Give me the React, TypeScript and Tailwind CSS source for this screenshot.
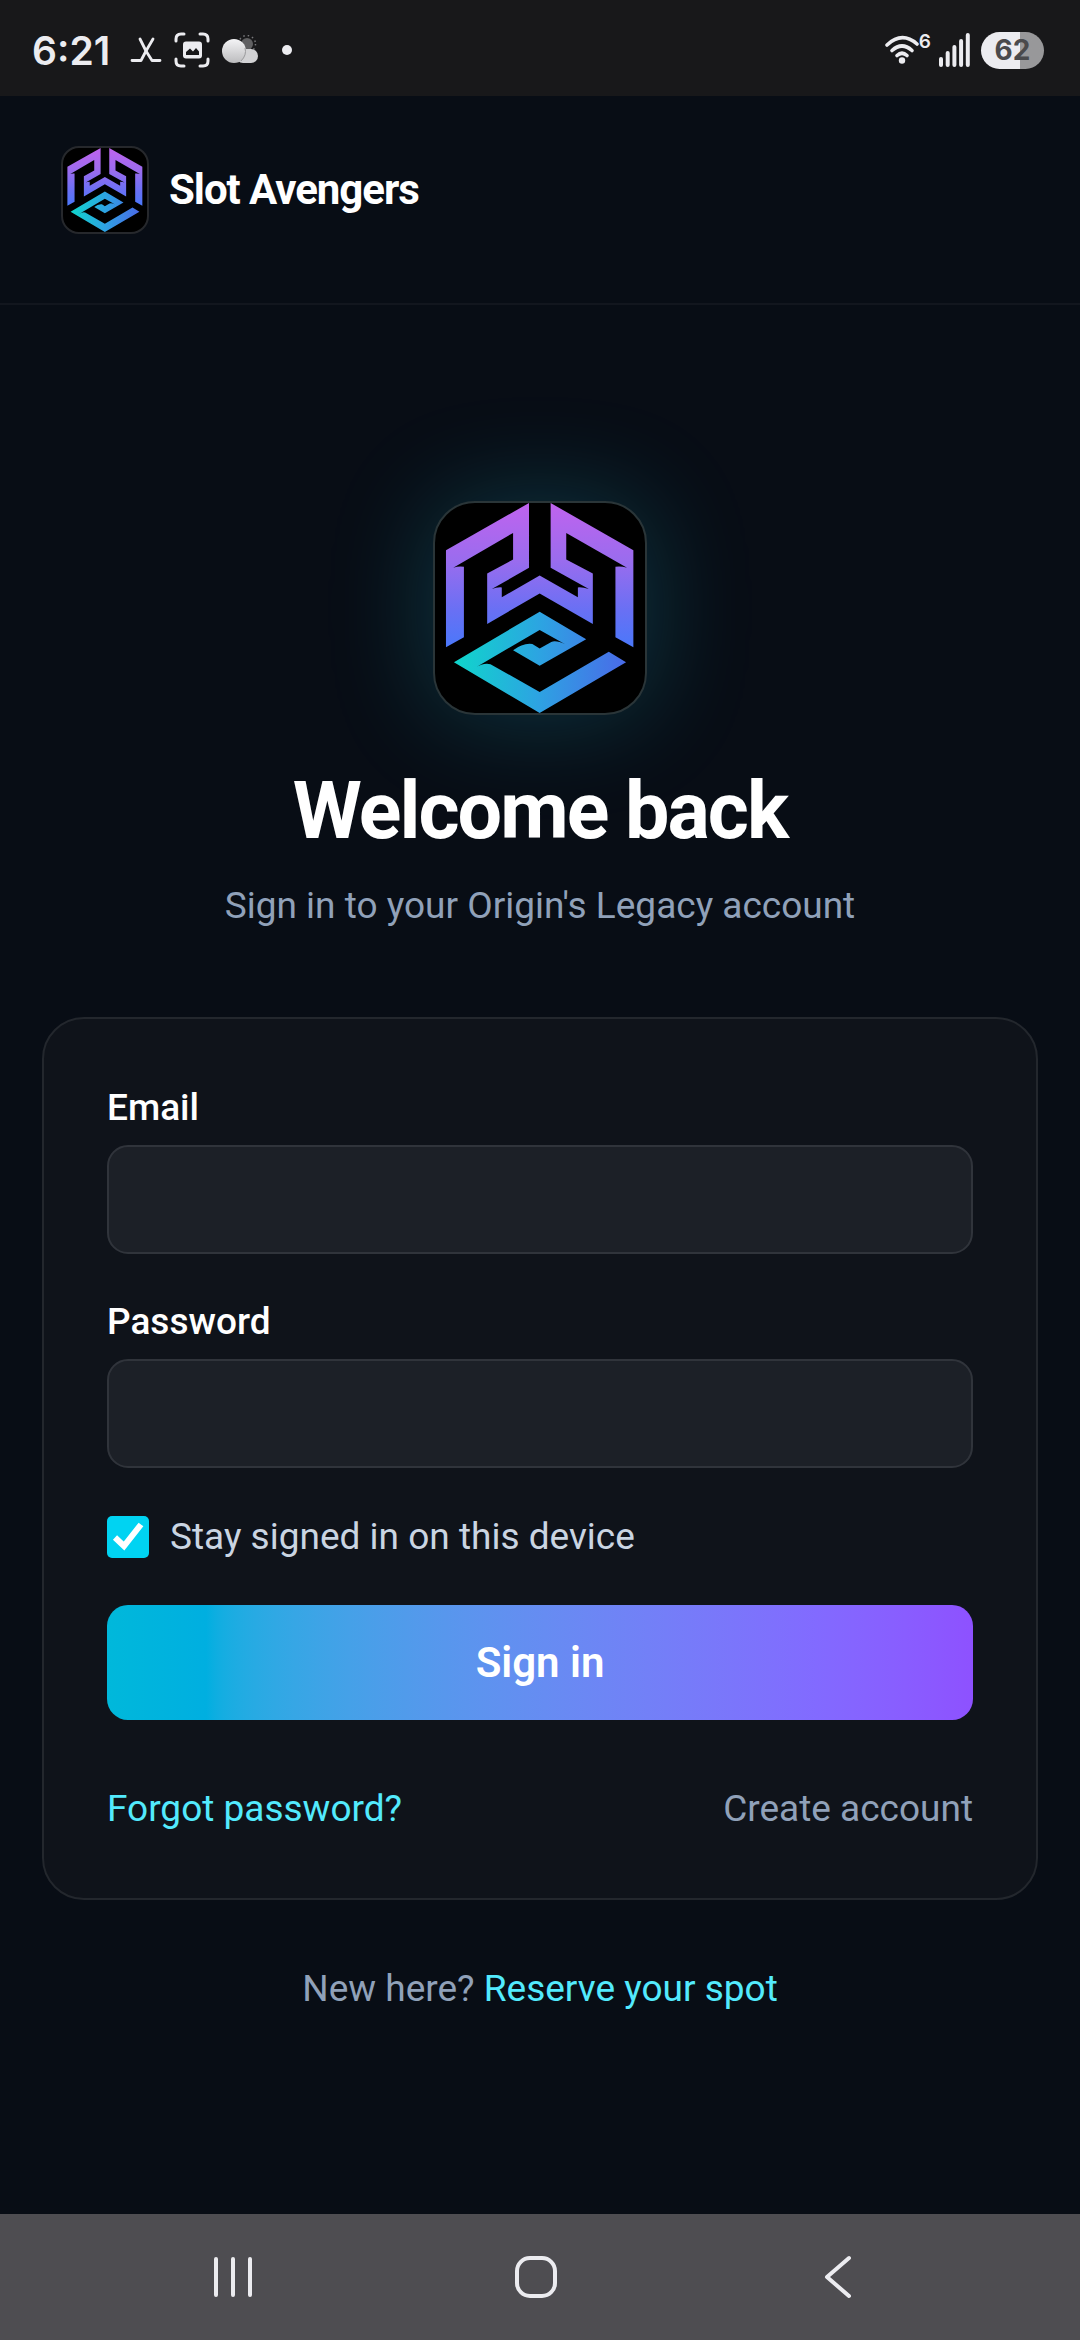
import { useId, useState } from "react";

function BrandMark() {
  const id = useId();
  const upper = `${id}-upper`;
  const lower = `${id}-lower`;
  return (
    <svg viewBox="105 98 632 632" className="size-full" aria-hidden="true">
      <defs>
        <linearGradient id={upper} gradientUnits="userSpaceOnUse" x1="420" y1="98" x2="420" y2="532">
          <stop offset="0" stopColor="#c063ee" />
          <stop offset="0.4" stopColor="#9a6cee" />
          <stop offset="0.75" stopColor="#6870f4" />
          <stop offset="1" stopColor="#4a78fa" />
        </linearGradient>
        <linearGradient id={lower} gradientUnits="userSpaceOnUse" x1="162" y1="560" x2="680" y2="590">
          <stop offset="0" stopColor="#0fd6cb" />
          <stop offset="0.5" stopColor="#2da3e2" />
          <stop offset="1" stopColor="#4a6ae8" />
        </linearGradient>
      </defs>
      <path
        fill={`url(#${upper})`}
        d="M388 98 138 240V532L192 502V290Q176 287 160 293L340 188V268L262 310V462L420 370 580 462V310L500 268V188L683 293Q664 287 648 290V502L702 532V240L453 98V293L568 357Q550 351 535 352V382L420 316 306 382V352Q290 351 276 357L388 293Z"
      />
      <path
        fill={`url(#${lower})`}
        d="M420 425 162 577 420 730 680 577 628 546 420 667 272 583Q252 577 226 594L420 480 498 524Q470 510 455 516L420 536 398 522Q370 518 340 541L420 588 560 508Z"
      />
    </svg>
  );
}

function StatusBar() {
  return (
    <div className="flex h-24 items-center justify-between bg-[#18181a] pr-9 pl-8 text-[#ececf0]">
      <div className="flex items-center pt-1">
        <span className="font-[Inter] text-[39px] leading-none font-semibold">6:21</span>
        <svg viewBox="0 0 32 26" className="ml-5 h-[26px] w-8" fill="none" stroke="currentColor" strokeWidth="2.8" strokeLinecap="round" strokeLinejoin="round" aria-hidden="true">
          <path d="M10 2 16 14 22 23.500H30" />
          <path d="M23 2 16 14 11 23.500H2" />
        </svg>
        <svg viewBox="0 0 36 36" className="ml-3 size-9" aria-hidden="true">
          <g fill="none" stroke="currentColor" strokeWidth="3" strokeLinecap="round">
            <path d="M2 9V7Q2 2 7 2H10M26 2H29Q34 2 34 7V9M34 27V29Q34 34 29 34H26M10 34H7Q2 34 2 29V27" />
          </g>
          <rect x="9" y="9.500" width="19" height="17" rx="3" fill="currentColor" />
          <path d="M12 23V20L16 16.500 19 19.500 22 16 25 19.500V23Z" fill="#18181a" />
        </svg>
        <svg viewBox="0 0 36 30" className="ml-3 h-[30px] w-9" aria-hidden="true">
          <defs>
            <linearGradient id="cloud" x1="0" y1="0" x2="0" y2="1">
              <stop offset="0" stopColor="#f4f4f6" />
              <stop offset="1" stopColor="#bcbcbe" />
            </linearGradient>
          </defs>
          <circle cx="25" cy="9" r="8.500" fill="none" stroke="#77777a" strokeWidth="1.500" strokeDasharray="1.500 3" />
          <circle cx="25" cy="9" r="6" fill="#606062" />
          <rect x="14" y="14" width="22" height="14" rx="7" fill="#d2d2d4" />
          <circle cx="12" cy="16" r="12" fill="url(#cloud)" />
          <path d="M23 13Q25 20 19 26" fill="none" stroke="#9a9a9c" strokeWidth="1" />
        </svg>
        <span className="ml-6 size-[10px] rounded-full bg-[#ececf0]" />
      </div>
      <div className="flex items-center pt-1">
        <svg viewBox="0 0 36 30" className="h-[30px] w-9" aria-hidden="true">
          <g fill="none" stroke="currentColor" strokeWidth="3.600" strokeLinecap="round">
            <path d="M2 10Q17 -4 32 9" />
            <path d="M7 15.500Q17 6.500 27 15.500" />
            <path d="M12 20.500Q17 16 22 20.500" />
          </g>
          <circle cx="17" cy="25.500" r="3.200" fill="currentColor" />
        </svg>
        <span className="-ml-[2px] self-start font-[Inter] text-[19px] leading-none font-semibold">6</span>
        <svg viewBox="0 0 32 34" className="ml-2 h-[34px] w-8" fill="currentColor" aria-hidden="true">
          <rect x="0" y="24" width="4" height="10" rx="2" />
          <rect x="6.700" y="18" width="4" height="16" rx="2" />
          <rect x="13.400" y="12" width="4" height="22" rx="2" />
          <rect x="20.100" y="6" width="4" height="28" rx="2" />
          <rect x="26.800" y="0" width="4" height="34" rx="2" />
        </svg>
        <span className="ml-[10px] flex h-[37px] w-[63px] items-center justify-center rounded-full bg-linear-to-r from-[#ececf0] from-62% to-[#98989a] to-62% font-[Inter] text-[28px] font-bold text-[#4a4a4c]">
          62
        </span>
      </div>
    </div>
  );
}

function Field({ id, label, type }: { id: string; label: string; type: string }) {
  return (
    <div className="flex flex-col gap-[11px]">
      <label htmlFor={id} className="font-medium text-white">
        {label}
      </label>
      <input
        id={id}
        type={type}
        className="h-[109px] w-full rounded-[21px] border-2 border-[#30343b] bg-[#1c2027] px-8 text-white outline-none"
      />
    </div>
  );
}

function NavigationBar() {
  return (
    <nav className="mt-auto flex h-[126px] items-center justify-between bg-[#4e4d51] pr-[220px] pl-[211px] text-[#ececf0]">
      <button type="button" aria-label="Recent apps">
        <svg viewBox="0 0 44 44" className="size-11" fill="none" stroke="currentColor" strokeWidth="4" strokeLinecap="round">
          <path d="M5 4V40M22 4V40M39 4V40" />
        </svg>
      </button>
      <button type="button" aria-label="Home">
        <svg viewBox="0 0 44 44" className="size-11" fill="none" stroke="currentColor" strokeWidth="4">
          <rect x="3" y="3" width="38" height="38" rx="13" />
        </svg>
      </button>
      <button type="button" aria-label="Back">
        <svg viewBox="0 0 44 44" className="size-11" fill="none" stroke="currentColor" strokeWidth="4" strokeLinecap="round" strokeLinejoin="round">
          <path d="M33 3 11 22 33 41" />
        </svg>
      </button>
    </nav>
  );
}

export default function App() {
  const [stay, setStay] = useState(true);
  return (
    <div className="flex min-h-screen flex-col bg-[#080d15] font-[Roboto,sans-serif] text-[37px] leading-[52px]">
      <StatusBar />

      <header className="flex items-center gap-5 border-b-2 border-[#12161e] px-[61px] pt-[50px] pb-[69px]">
        <div className="size-[88px] shrink-0 overflow-hidden rounded-[18px] border-2 border-[#26282c] bg-black">
          <BrandMark />
        </div>
        <span className="text-[42px] font-bold tracking-tight text-white">Slot Avengers</span>
      </header>

      <main className="flex flex-col items-center px-[42px] pt-[196px]">
        <div className="size-[214px] overflow-hidden rounded-[42px] border-2 border-[#2a3538] bg-black shadow-[0_0_105px_rgba(34,211,238,0.22)]">
          <BrandMark />
        </div>
        <h1 className="mt-12 text-[79px] leading-[96px] font-bold tracking-tight text-white">Welcome back</h1>
        <p className="mt-[21px] text-slate-400">Sign in to your Origin's Legacy account</p>

        <form
          className="mt-[85px] flex w-full flex-col rounded-[42px] border-2 border-[#23272d] bg-[#0f131a] p-[63px]"
          onSubmit={(event) => event.preventDefault()}
        >
          <div className="flex flex-col gap-[42px]">
            <Field id="email" label="Email" type="email" />
            <Field id="password" label="Password" type="password" />
            <label className="flex h-[54px] items-center gap-[21px] text-slate-300">
              <span className="relative flex size-[42px]">
                <input
                  type="checkbox"
                  checked={stay}
                  onChange={(event) => setStay(event.target.checked)}
                  className="peer size-[42px] appearance-none rounded-[5px] bg-[#1c2027] checked:bg-[#00d3f2]"
                />
                <svg viewBox="0 0 42 42" className="pointer-events-none absolute inset-0 hidden size-full peer-checked:block" fill="none" stroke="white" strokeWidth="6" aria-hidden="true">
                  <path d="M8 21.500 17 30 34 8.500" />
                </svg>
              </span>
              Stay signed in on this device
            </label>
          </div>
          <button
            type="submit"
            className="mt-[41px] h-[115px] rounded-[21px] bg-linear-to-r from-cyan-500 to-violet-500 text-[42px] font-semibold text-white"
          >
            Sign in
          </button>
          <div className="mt-[63px] flex justify-between">
            <a href="#forgot" className="text-cyan-300">Forgot password?</a>
            <a href="#create" className="text-slate-400">Create account</a>
          </div>
        </form>

        <p className="mt-[63px] text-slate-400">
          New here? <a href="#reserve" className="text-cyan-300">Reserve your spot</a>
        </p>
      </main>

      <NavigationBar />
    </div>
  );
}
